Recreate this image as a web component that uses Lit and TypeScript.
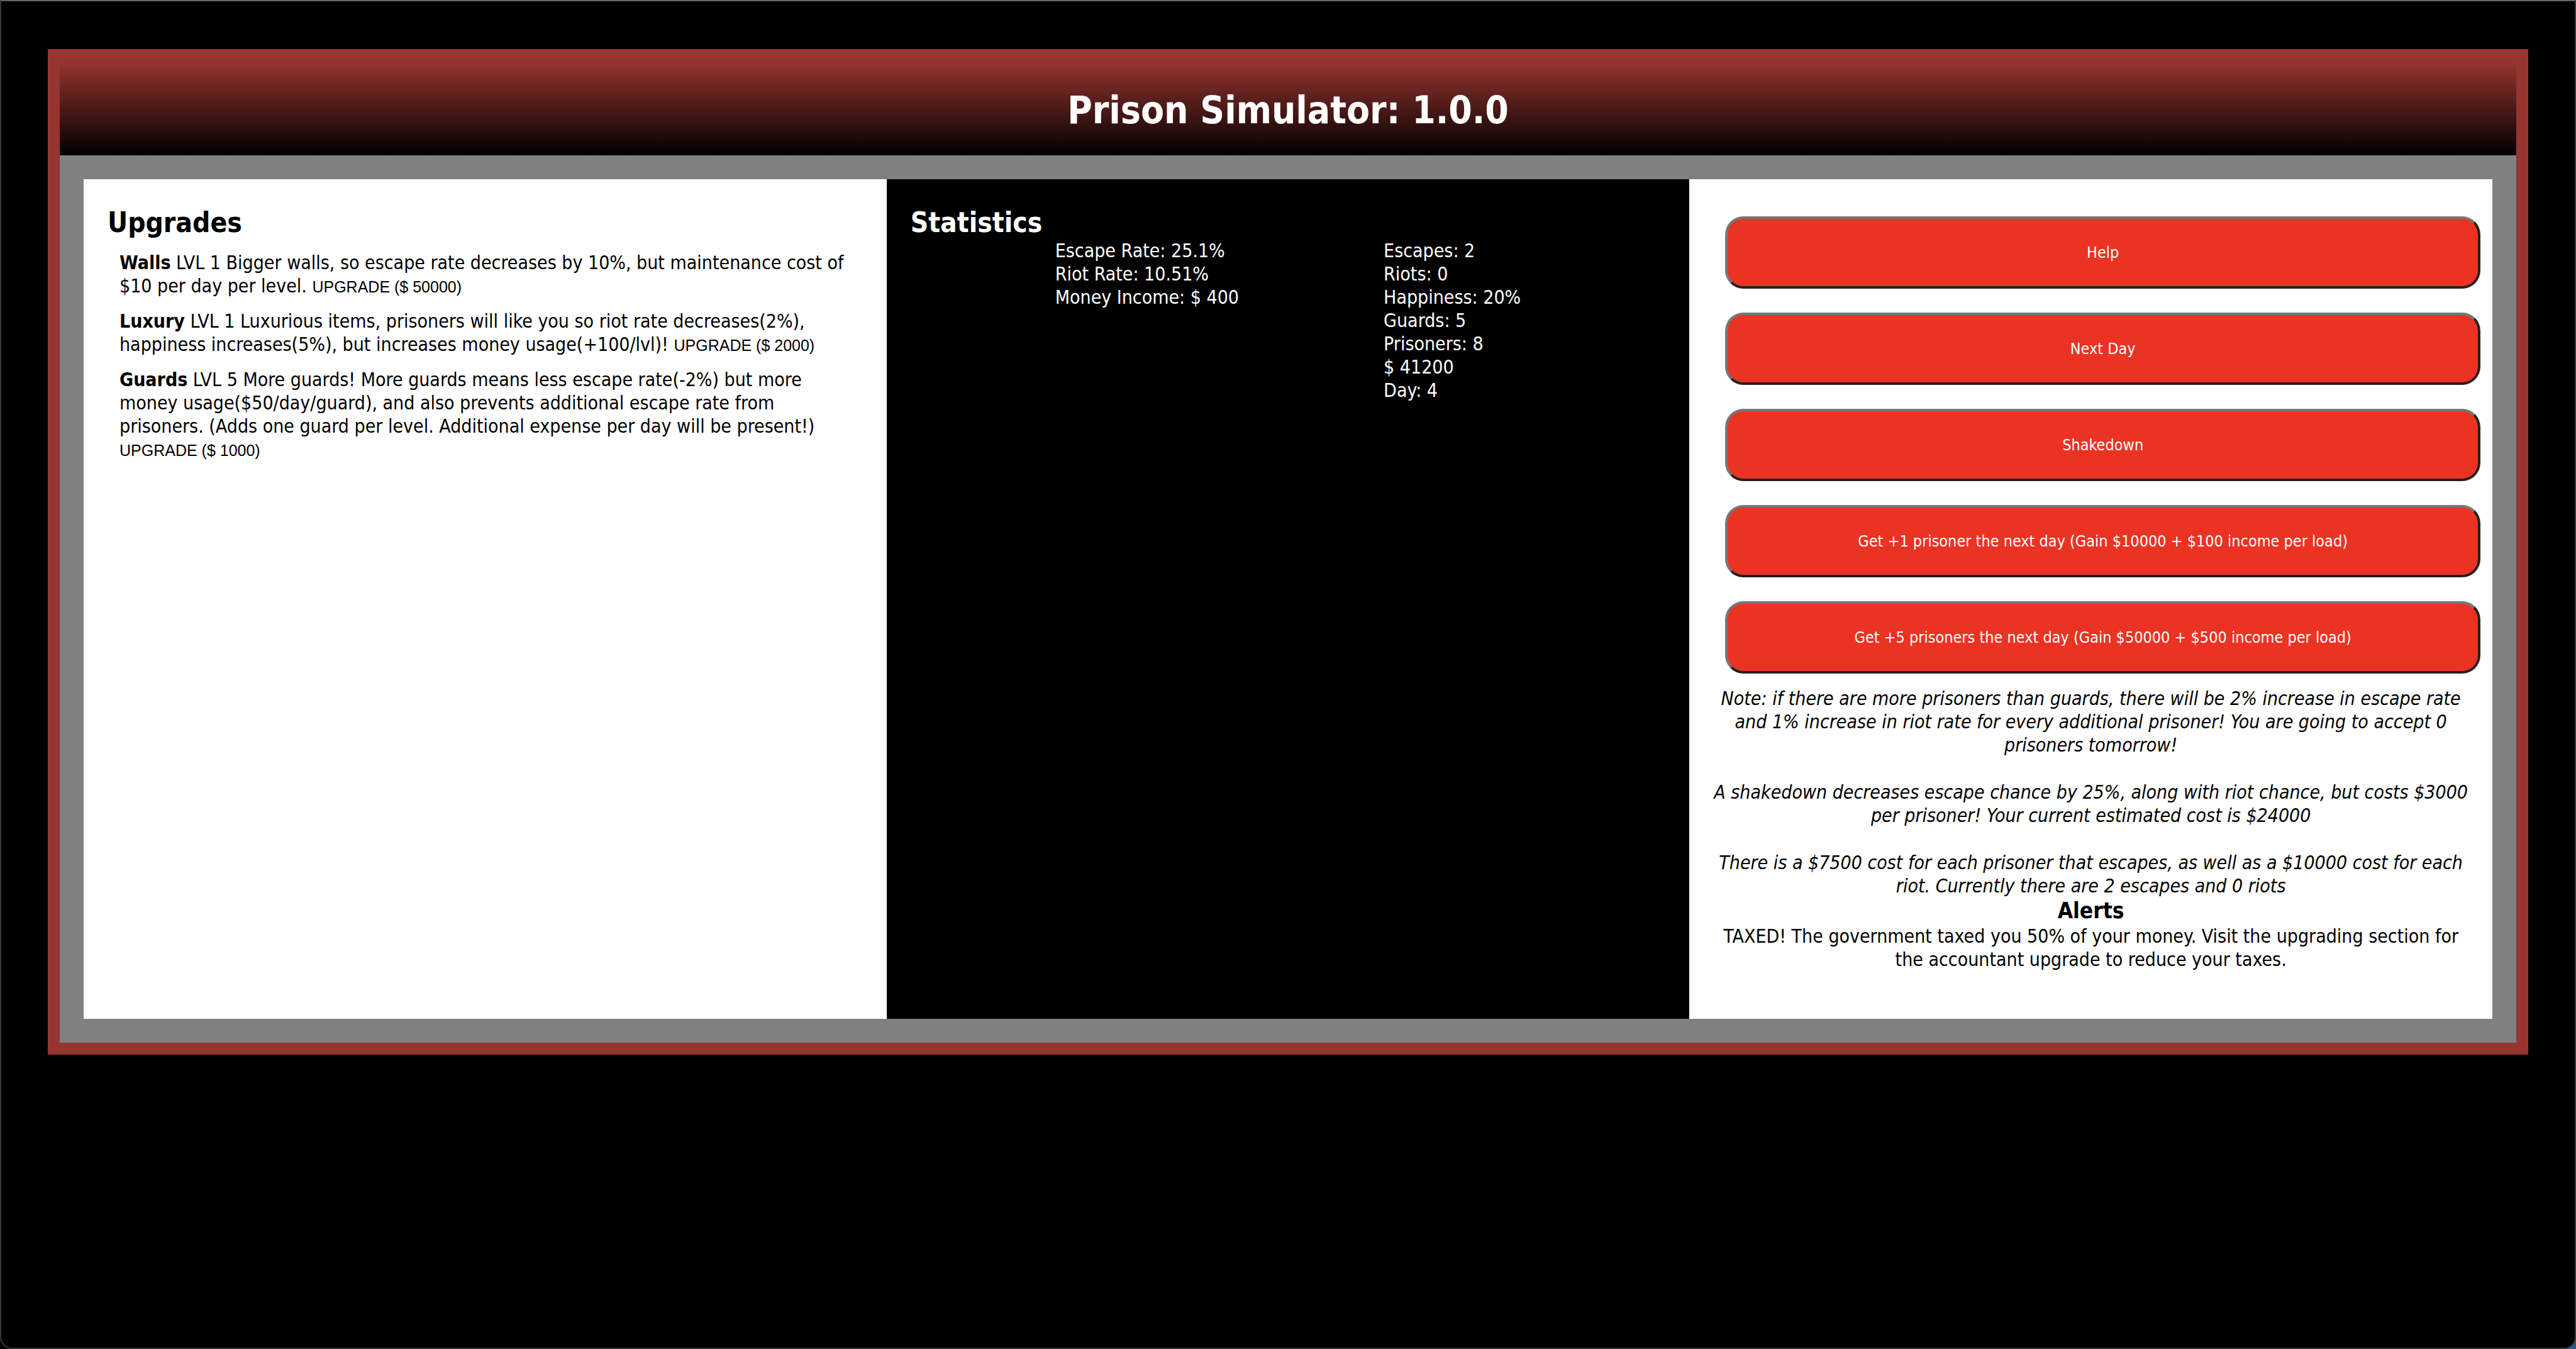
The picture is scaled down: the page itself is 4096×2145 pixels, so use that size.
import { LitElement, html, css } from "lit";
import { customElement, state } from "lit/decorators.js";

interface Upgrade {
  name: string;
  level: number;
  description: string;
  price: number;
}

@customElement("app-root")
export class AppRoot extends LitElement {
  static styles = css`
    :host {
      display: block;
      font-family: "DejaVu Sans Condensed", "DejaVu Sans", sans-serif;
      font-size: 30px;
      line-height: 37px;
      color: #000;
      background: linear-gradient(to right, #000 50%, #2a5a9c 50%);
    }
    h1,
    h2,
    h3,
    p,
    ul {
      margin: 0;
      padding: 0;
    }
    ul {
      list-style: none;
    }
    .window {
      box-sizing: border-box;
      min-height: 100vh;
      padding: 76px 74px;
      background: #000;
      border: 2px solid #363636;
      border-top-color: #666;
      border-radius: 0 0 19px 19px;
    }
    .game {
      border: 19px solid #963430;
      background: #808080;
    }
    .title-bar {
      padding: 42px 38px 35px;
      background: linear-gradient(#963430, #000);
      color: #fff;
      text-align: center;
    }
    h1 {
      font-size: 60px;
      line-height: 73px;
    }
    .columns {
      display: grid;
      grid-template-columns: repeat(3, minmax(0, 1fr));
      padding: 38px;
    }
    .panel {
      padding: 42px 38px;
      background: #fff;
    }
    .panel.dark {
      background: #000;
      color: #fff;
    }
    h2 {
      font-size: 44px;
      line-height: 53px;
    }
    .upgrades {
      display: flex;
      flex-direction: column;
      gap: 19px;
      padding: 19px;
    }
    .buy {
      border: 0;
      padding: 0;
      background: none;
      color: inherit;
      font-family: "Liberation Sans", Arial, sans-serif;
      font-size: 25px;
      line-height: 29px;
      cursor: pointer;
    }
    .stats {
      display: flex;
      justify-content: space-evenly;
    }
    .panel.controls {
      padding: 59px 0 76px;
    }
    .actions {
      display: flex;
      flex-direction: column;
      gap: 38px;
      padding: 0 19px 21px 57px;
    }
    .action {
      height: 115px;
      border: 4px solid;
      border-color: #767676 #212121 #212121 #767676;
      border-radius: 29px;
      background: #eb3323;
      color: #fff;
      font-family: inherit;
      font-size: 25px;
      cursor: pointer;
    }
    .notes {
      display: flex;
      flex-direction: column;
      gap: 38px;
      padding: 0 34px;
      font-style: italic;
      text-align: center;
    }
    .alerts {
      padding: 0 38px;
      text-align: center;
    }
    h3 {
      font-size: 35px;
      line-height: 43px;
    }
  `;

  @state() private upgrades: Upgrade[] = [
    {
      name: "Walls",
      level: 1,
      description: "Bigger walls, so escape rate decreases by 10%, but maintenance cost of $10 per day per level.",
      price: 50000,
    },
    {
      name: "Luxury",
      level: 1,
      description:
        "Luxurious items, prisoners will like you so riot rate decreases(2%), happiness increases(5%), but increases money usage(+100/lvl)!",
      price: 2000,
    },
    {
      name: "Guards",
      level: 5,
      description:
        "More guards! More guards means less escape rate(-2%) but more money usage($50/day/guard), and also prevents additional escape rate from prisoners. (Adds one guard per level. Additional expense per day will be present!)",
      price: 1000,
    },
  ];

  private rates = ["Escape Rate: 25.1%", "Riot Rate: 10.51%", "Money Income: $ 400"];

  private totals = ["Escapes: 2", "Riots: 0", "Happiness: 20%", "Guards: 5", "Prisoners: 8", "$ 41200", "Day: 4"];

  private actions = [
    "Help",
    "Next Day",
    "Shakedown",
    "Get +1 prisoner the next day (Gain $10000 + $100 income per load)",
    "Get +5 prisoners the next day (Gain $50000 + $500 income per load)",
  ];

  private notes = [
    "Note: if there are more prisoners than guards, there will be 2% increase in escape rate and 1% increase in riot rate for every additional prisoner! You are going to accept 0 prisoners tomorrow!",
    "A shakedown decreases escape chance by 25%, along with riot chance, but costs $3000 per prisoner! Your current estimated cost is $24000",
    "There is a $7500 cost for each prisoner that escapes, as well as a $10000 cost for each riot. Currently there are 2 escapes and 0 riots",
  ];

  render() {
    return html`
      <div class="window">
        <main class="game">
          <header class="title-bar"><h1>Prison Simulator: 1.0.0</h1></header>
          <div class="columns">
            <section class="panel">
              <h2>Upgrades</h2>
              <div class="upgrades">
                ${this.upgrades.map(
                  (u) => html`<p>
                    <b>${u.name}</b>${` LVL ${u.level} ${u.description} `}<button class="buy" type="button">
                      ${`UPGRADE ($ ${u.price})`}
                    </button>
                  </p>`
                )}
              </div>
            </section>
            <section class="panel dark">
              <h2>Statistics</h2>
              <div class="stats">
                <ul>
                  ${this.rates.map((r) => html`<li>${r}</li>`)}
                </ul>
                <ul>
                  ${this.totals.map((t) => html`<li>${t}</li>`)}
                </ul>
              </div>
            </section>
            <section class="panel controls">
              <div class="actions">
                ${this.actions.map((a) => html`<button class="action" type="button">${a}</button>`)}
              </div>
              <div class="notes">${this.notes.map((n) => html`<p>${n}</p>`)}</div>
              <div class="alerts">
                <h3>Alerts</h3>
                <p>
                  TAXED! The government taxed you 50% of your money. Visit the upgrading section for the accountant
                  upgrade to reduce your taxes.
                </p>
              </div>
            </section>
          </div>
        </main>
      </div>
    `;
  }
}
